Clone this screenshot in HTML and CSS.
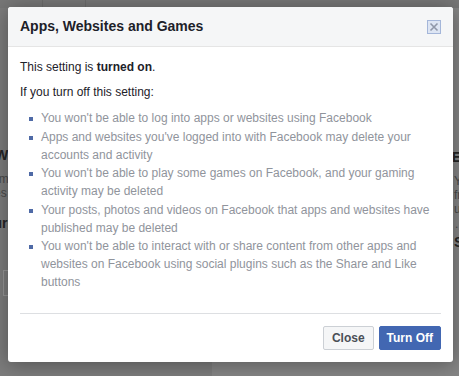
FILE: index.html
```html
<!DOCTYPE html>
<html>
<head>
<meta charset="utf-8">
<link rel="stylesheet" href="styles.css">
</head>
<body>
<div class="page">
  <div class="col col-left">
    <div class="topbar"><span class="tab"></span><span class="tab"></span></div>
    <div class="frag bold f1">Websites</div>
    <div class="frag gray f2">Apps from</div>
    <div class="frag gray f3">websites</div>
    <div class="frag bold f4">Turn</div>
    <div class="frag-box"></div>
  </div>
  <div class="col col-right">
    <div class="topbar"></div>
    <div class="frag bold r1">Edit</div>
    <div class="frag gray r2">Your</div>
    <div class="frag gray r3">from</div>
    <div class="frag gray r4">using</div>
    <div class="frag gray r5">.</div>
    <div class="frag bold r6">Sec</div>
  </div>
</div>

<div class="dialog" role="dialog">
  <div class="dlg-header">
    <h2 class="dlg-title">Apps, Websites and Games</h2>
    <button class="dlg-close" aria-label="Close">
      <svg width="14" height="14" viewBox="0 0 14 14">
        <rect x="0.5" y="0.5" width="13" height="13" fill="#dde5f3" stroke="#a4b6d9"/>
        <path d="M3.5 3.5 L10.5 10.5 M10.5 3.5 L3.5 10.5" stroke="#8f97a8" stroke-width="1.6"/>
      </svg>
    </button>
  </div>
  <div class="dlg-body">
    <p class="lead">This setting is <b>turned on</b>.</p>
    <p class="lead second">If you turn off this setting:</p>
    <ul class="effects">
      <li>You won't be able to log into apps or websites using Facebook</li>
      <li>Apps and websites you've logged into with Facebook may delete your accounts and activity</li>
      <li>You won't be able to play some games on Facebook, and your gaming activity may be deleted</li>
      <li>Your posts, photos and videos on Facebook that apps and websites have published may be deleted</li>
      <li>You won't be able to interact with or share content from other apps and websites on Facebook using social plugins such as the Share and Like buttons</li>
    </ul>
  </div>
  <div class="dlg-footer">
    <button class="btn btn-close">Close</button>
    <button class="btn btn-primary">Turn Off</button>
  </div>
</div>
</body>
</html>
```
FILE: styles.css
```css
* { box-sizing: border-box; }
html, body {
  margin: 0;
  padding: 0;
  width: 459px;
  height: 376px;
  overflow: hidden;
  font-family: "Liberation Sans", Arial, sans-serif;
}
body { position: relative; background: #7e7e7e; }

.page {
  display: flex;
  height: 376px;
  overflow: hidden;
}
.col { overflow: hidden; }
.col-left { width: 212px; background: #7c7c7c; }
.col-right { flex: 1; background: #858585; }

.topbar {
  height: 8px;
  background: #777;
  display: flex;
}
.topbar .tab {
  width: 43px;
  border-right: 1px solid #6c6c6c;
}
.frag {
  white-space: nowrap;
  line-height: 14px;
}
.bold { font-weight: bold; font-size: 14px; color: #252525; }
.gray { font-size: 12px; color: #4a4a4a; }

.f1 { margin: 140px 0 0 -5px; }
.f2 { margin: 10px 0 0 -46px; }
.f3 { margin: 0 0 0 -40px; }
.f4 { margin: 16px 0 0 -14px; }
.frag-box {
  margin: 40px 0 0 3px;
  width: 40px;
  height: 26px;
  border: 1px solid #959595;
}

.r1 { margin: 142px 0 0 240px; }
.r2 { margin: 10px 0 0 242px; }
.r3 { margin: 0 0 0 242px; }
.r4 { margin: 0 0 0 242px; }
.r5 { margin: 1px 0 0 243px; }
.r6 { margin: 4px 0 0 242px; }

.dialog {
  position: absolute;
  left: 8px;
  top: 7px;
  width: 445px;
  height: 355px;
  background: #fff;
  border-radius: 3px;
  box-shadow: 0 2px 20px rgba(0, 0, 0, 0.35);
  overflow: hidden;
  display: flex;
  flex-direction: column;
}

.dlg-header {
  height: 40px;
  background: #f5f6f7;
  border-bottom: 1px solid #e5e5e5;
  display: flex;
  align-items: center;
  justify-content: space-between;
  padding: 0 12px;
}
.dlg-title {
  margin: 0;
  font-size: 14px;
  font-weight: bold;
  color: #1d2129;
  line-height: 19px;
}
.dlg-close {
  border: 0;
  padding: 0;
  margin: 0;
  background: none;
  width: 14px;
  height: 14px;
  display: block;
}
.dlg-close svg { display: block; }

.dlg-body {
  padding: 11px 12px 0;
  flex: 1;
}
.lead {
  margin: 0;
  font-size: 12px;
  line-height: 18px;
  color: #1d2129;
}
.lead.second { margin-top: 7px; }

.effects {
  list-style: none;
  margin: 8px 0 0;
  padding: 0 0 0 21px;
}
.effects li {
  position: relative;
  font-size: 12px;
  line-height: 18px;
  color: #90949c;
  margin-bottom: 0.5px;
}
.effects li::before {
  content: "";
  position: absolute;
  left: -12px;
  top: 8px;
  width: 4px;
  height: 4px;
  background: #4f6aa6;
}

.dlg-footer {
  margin: 0 12px;
  border-top: 1px solid #dddfe2;
  padding: 12px 0 12px;
  display: flex;
  justify-content: flex-end;
  gap: 5px;
}
.btn {
  height: 24px;
  padding: 0 8px;
  font-family: "Liberation Sans", Arial, sans-serif;
  font-size: 12px;
  font-weight: bold;
  line-height: 22px;
  border-radius: 2px;
  border: 1px solid;
}
.btn-close {
  background: #f5f6f7;
  border-color: #ccd0d5;
  color: #4b4f56;
}
.btn-primary {
  background: #4267b2;
  border-color: #4267b2;
  color: #fff;
  padding: 0 7px;
}
```
